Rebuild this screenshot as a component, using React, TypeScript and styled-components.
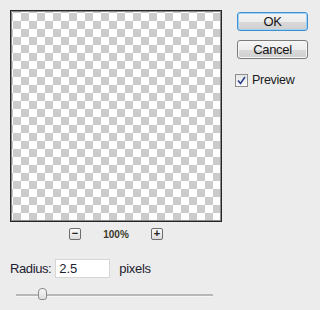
import React, { useState } from 'react';
import styled, { createGlobalStyle } from 'styled-components';

const GlobalStyle = createGlobalStyle`
  html, body {
    margin: 0;
    padding: 0;
    background: #ececec;
  }
  body {
    font-family: "Liberation Sans", Arial, sans-serif;
    color: #1d2230;
  }
`;

function App() {
  const [preview, setPreview] = useState<boolean>(true);
  const [radius, setRadius] = useState<string>('2.5');
  const [zoom, setZoom] = useState<number>(100);

  return (
    <Dialog>
      <GlobalStyle />
      <TopRow>
        <LeftColumn>
          <PreviewBox />
          <ZoomRow>
            <ZoomButton onClick={() => setZoom(Math.max(zoom - 25, 25))}>−</ZoomButton>
            <ZoomLabel>{zoom}%</ZoomLabel>
            <ZoomButton onClick={() => setZoom(zoom + 25)}>+</ZoomButton>
          </ZoomRow>
        </LeftColumn>
        <RightColumn>
          <DialogButton $primary>OK</DialogButton>
          <DialogButton>Cancel</DialogButton>
          <CheckRow onClick={() => setPreview(!preview)}>
            <CheckBox>
              {preview && (
                <svg width="9" height="9" viewBox="0 0 9 9">
                  <path d="M1 4.5 L3.5 7.5 L8 1" fill="none" stroke="#2b3f8f" strokeWidth="1.6" />
                </svg>
              )}
            </CheckBox>
            <span>Preview</span>
          </CheckRow>
        </RightColumn>
      </TopRow>
      <RadiusRow>
        <FieldLabel>Radius:</FieldLabel>
        <RadiusInput value={radius} onChange={(e) => setRadius(e.target.value)} />
        <UnitLabel>pixels</UnitLabel>
      </RadiusRow>
      <SliderTrack>
        <SliderThumb />
      </SliderTrack>
    </Dialog>
  );
}
export default App;

const Dialog = styled.div`
  width: 320px;
  height: 310px;
  box-sizing: border-box;
  padding: 10px 0 0 10px;
  display: flex;
  flex-direction: column;
`;

const TopRow = styled.div`
  display: flex;
  flex-direction: row;
`;

const LeftColumn = styled.div`
  display: flex;
  flex-direction: column;
  width: 212px;
`;

const PreviewBox = styled.div`
  width: 212px;
  height: 212px;
  box-sizing: border-box;
  border: 1px solid #262626;
  box-shadow: inset 0 0 0 1px #8a8a8a;
  background: repeating-conic-gradient(#cbcbcb 0 25%, #ffffff 0 50%) 2px 2px / 16px 16px;
`;

const ZoomRow = styled.div`
  display: flex;
  flex-direction: row;
  justify-content: center;
  align-items: center;
  gap: 21px;
  margin-top: 6px;
`;

const ZoomButton = styled.div`
  width: 10px;
  height: 10px;
  border: 1px solid #6e6e6e;
  border-radius: 2px;
  background: linear-gradient(#fafafa, #dcdcdc);
  font-size: 11px;
  font-weight: bold;
  line-height: 9px;
  text-align: center;
  color: #222;
  cursor: pointer;
`;

const ZoomLabel = styled.div`
  font-size: 10px;
  font-weight: bold;
  color: #3a3a2a;
  width: 28px;
  text-align: center;
`;

const RightColumn = styled.div`
  display: flex;
  flex-direction: column;
  margin-left: 15px;
  padding-top: 2px;
  gap: 9px;
`;

const DialogButton = styled.button<{ $primary?: boolean }>`
  width: 71px;
  height: 19px;
  padding: 0;
  box-sizing: border-box;
  border: 1px solid ${(p) => (p.$primary ? '#3d8fd1' : '#7a7a7a')};
  box-shadow: ${(p) => (p.$primary ? 'inset 0 0 0 1px #9fd3f5' : 'inset 0 0 0 1px #f7f7f7')};
  border-radius: 3px;
  background: linear-gradient(#f5f5f5 0%, #ececec 50%, #dadada 51%, #cfcfcf 100%);
  font-family: "Liberation Sans", Arial, sans-serif;
  font-size: 13px;
  letter-spacing: -0.3px;
  color: #141414;
  cursor: pointer;
`;

const CheckRow = styled.label`
  display: flex;
  flex-direction: row;
  align-items: center;
  gap: 4px;
  margin-top: 5px;
  margin-left: -2px;
  font-size: 12.5px;
  letter-spacing: -0.3px;
  color: #1b1b1b;
  cursor: pointer;
`;

const CheckBox = styled.div`
  width: 11px;
  height: 11px;
  border: 1px solid #8e8f8f;
  background: linear-gradient(#e6e6e6, #fbfbfb);
  display: flex;
  align-items: center;
  justify-content: center;
`;

const RadiusRow = styled.div`
  display: flex;
  flex-direction: row;
  align-items: center;
  margin-top: 19px;
`;

const FieldLabel = styled.span`
  font-size: 13px;
  letter-spacing: -0.4px;
  color: #1d2230;
  margin-right: 4px;
`;

const UnitLabel = styled.span`
  font-size: 13px;
  letter-spacing: -0.3px;
  color: #1d2230;
  margin-left: 9px;
`;

const RadiusInput = styled.input`
  width: 55px;
  height: 19px;
  box-sizing: border-box;
  border: 1px solid #d6d6d6;
  background: #fff;
  padding: 0 3px;
  font-family: "Liberation Sans", Arial, sans-serif;
  font-size: 13px;
  color: #1d2230;
  outline: none;
`;

const SliderTrack = styled.div`
  position: relative;
  width: 197px;
  height: 2px;
  margin: 16px 0 0 6px;
  background: #b8b8b8;
  border-bottom: 1px solid #f6f6f6;
`;

const SliderThumb = styled.div`
  position: absolute;
  left: 22px;
  top: -6px;
  width: 7px;
  height: 10px;
  border: 1px solid #8a8a8a;
  border-radius: 4px 4px 3px 3px;
  background: linear-gradient(#f8f8f8, #dedede);
`;
